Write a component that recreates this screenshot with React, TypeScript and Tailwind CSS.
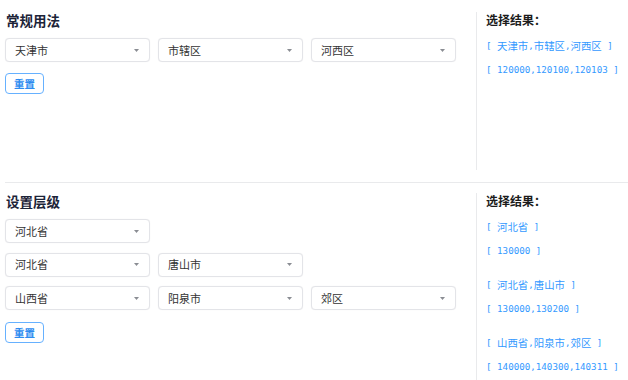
type Item = { names: string[]; codes: string[] };

function Select({ value }: { value: string }) {
  return (
    <div className="w-[145px] h-[24px] border border-[#e3e4e8] rounded-[4px] bg-white pl-[9px] pr-[10px] flex items-center justify-between shadow-[0_0_1px_rgba(0,0,0,0.08)]">
      <span className="text-[11px] text-[#333]">{value}</span>
      <svg width="5" height="3" viewBox="0 0 5 3" className="text-[#8a8d93]">
        <path d="M0 0h5L2.5 3z" fill="currentColor" />
      </svg>
    </div>
  );
}

function ResetButton() {
  return (
    <button className="w-[39px] h-[21px] border border-[#66b1ff] rounded-[4px] bg-white text-[10.5px] font-bold text-[#2d8cf0] flex items-center justify-center">
      重置
    </button>
  );
}

function ResultGroup({ item }: { item: Item }) {
  const mono = "font-['DejaVu_Sans_Mono',monospace] text-[9.2px]";
  return (
    <div className="text-[#3399ff]">
      <div className="h-[24px] flex items-center whitespace-pre">
        <span className={mono}>{"[ "}</span>
        {item.names.map((n, i) => (
          <span key={n + i} className="flex items-center">
            {i > 0 && <span className={mono}>,</span>}
            <span className="text-[10.4px]">{n}</span>
          </span>
        ))}
        <span className={mono}>{" ]"}</span>
      </div>
      <div className={"h-[24px] flex items-center whitespace-pre " + mono}>
        {"[ " + item.codes.join(",") + " ]"}
      </div>
    </div>
  );
}

function ResultPanel({ items }: { items: Item[] }) {
  return (
    <div className="w-[152px] border-l border-[#e9eaec] pl-[9px]">
      <div className="h-[16px] flex items-center text-[12px] font-bold text-[#1c1c1c]">选择结果：</div>
      <div className="mt-[6px] flex flex-col gap-[10px]">
        {items.map((it, i) => (
          <ResultGroup key={i} item={it} />
        ))}
      </div>
    </div>
  );
}

export default function App() {
  return (
    <div className="w-[628px] h-[380px] overflow-hidden bg-white pl-[5px] font-['Noto_Sans_CJK_SC','Noto_Sans',sans-serif]">
      {/* 常规用法 */}
      <section className="flex h-[183px] border-b border-[#e9eaec]">
        <div className="flex-1 pt-[10px]">
          <h2 className="h-[20px] flex items-center pl-[1px] text-[13.5px] font-bold text-[#1c2438]">常规用法</h2>
          <div className="mt-[8px] flex gap-[8px]">
            <Select value="天津市" />
            <Select value="市辖区" />
            <Select value="河西区" />
          </div>
          <div className="mt-[11px]">
            <ResetButton />
          </div>
        </div>
        <div className="my-[12px] flex">
          <ResultPanel items={[{ names: ["天津市", "市辖区", "河西区"], codes: ["120000", "120100", "120103"] }]} />
        </div>
      </section>

      {/* 设置层级 */}
      <section className="flex h-[197px]">
        <div className="flex-1 pt-[8px]">
          <h2 className="h-[20px] flex items-center pl-[1px] text-[13.5px] font-bold text-[#1c2438]">设置层级</h2>
          <div className="mt-[8px] flex flex-col gap-[9.5px]">
            <div className="flex gap-[8px]">
              <Select value="河北省" />
            </div>
            <div className="flex gap-[8px]">
              <Select value="河北省" />
              <Select value="唐山市" />
            </div>
            <div className="flex gap-[8px]">
              <Select value="山西省" />
              <Select value="阳泉市" />
              <Select value="郊区" />
            </div>
          </div>
          <div className="mt-[12px]">
            <ResetButton />
          </div>
        </div>
        <div className="mt-[10px] flex">
          <ResultPanel
            items={[
              { names: ["河北省"], codes: ["130000"] },
              { names: ["河北省", "唐山市"], codes: ["130000", "130200"] },
              { names: ["山西省", "阳泉市", "郊区"], codes: ["140000", "140300", "140311"] },
            ]}
          />
        </div>
      </section>
    </div>
  );
}
